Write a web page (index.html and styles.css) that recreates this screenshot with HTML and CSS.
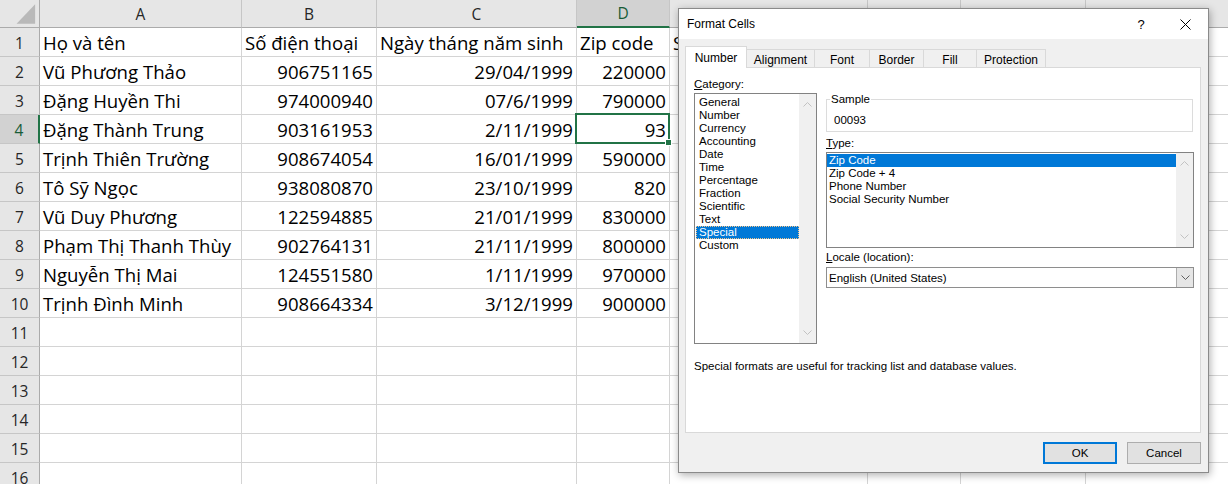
FILE: index.html
```html
<!DOCTYPE html>
<html lang="vi">
<head>
<meta charset="utf-8">
<title>Format Cells</title>
<link rel="stylesheet" href="styles.css">
</head>
<body>
<div class="sheet">
  <div class="corner"><svg width="40" height="28" viewBox="0 0 40 28"><polygon points="36,4 36,24 17,24" fill="#b9b9b9"/></svg></div>
  <div class="ch">A</div><div class="ch">B</div><div class="ch">C</div><div class="ch sel">D</div><div class="ch">E</div><div class="ch">F</div><div class="ch">G</div><div class="ch">H</div>

  <div class="rh">1</div><div class="c">Họ và tên</div><div class="c">Số điện thoại</div><div class="c">Ngày tháng năm sinh</div><div class="c">Zip code</div><div class="c">Số</div><div class="c"></div><div class="c"></div><div class="c"></div>
  <div class="rh">2</div><div class="c">Vũ Phương Thảo</div><div class="c n">906751165</div><div class="c n">29/04/1999</div><div class="c n">220000</div><div class="c"></div><div class="c"></div><div class="c"></div><div class="c"></div>
  <div class="rh">3</div><div class="c">Đặng Huyền Thi</div><div class="c n">974000940</div><div class="c n">07/6/1999</div><div class="c n">790000</div><div class="c"></div><div class="c"></div><div class="c"></div><div class="c"></div>
  <div class="rh sel">4</div><div class="c">Đặng Thành Trung</div><div class="c n">903161953</div><div class="c n">2/11/1999</div><div class="c n active">93</div><div class="c"></div><div class="c"></div><div class="c"></div><div class="c"></div>
  <div class="rh">5</div><div class="c">Trịnh Thiên Trường</div><div class="c n">908674054</div><div class="c n">16/01/1999</div><div class="c n">590000</div><div class="c"></div><div class="c"></div><div class="c"></div><div class="c"></div>
  <div class="rh">6</div><div class="c">Tô Sỹ Ngọc</div><div class="c n">938080870</div><div class="c n">23/10/1999</div><div class="c n">820</div><div class="c"></div><div class="c"></div><div class="c"></div><div class="c"></div>
  <div class="rh">7</div><div class="c">Vũ Duy Phương</div><div class="c n">122594885</div><div class="c n">21/01/1999</div><div class="c n">830000</div><div class="c"></div><div class="c"></div><div class="c"></div><div class="c"></div>
  <div class="rh">8</div><div class="c">Phạm Thị Thanh Thùy</div><div class="c n">902764131</div><div class="c n">21/11/1999</div><div class="c n">800000</div><div class="c"></div><div class="c"></div><div class="c"></div><div class="c"></div>
  <div class="rh">9</div><div class="c">Nguyễn Thị Mai</div><div class="c n">124551580</div><div class="c n">1/11/1999</div><div class="c n">970000</div><div class="c"></div><div class="c"></div><div class="c"></div><div class="c"></div>
  <div class="rh">10</div><div class="c">Trịnh Đình Minh</div><div class="c n">908664334</div><div class="c n">3/12/1999</div><div class="c n">900000</div><div class="c"></div><div class="c"></div><div class="c"></div><div class="c"></div>
  <div class="rh">11</div><div class="c"></div><div class="c"></div><div class="c"></div><div class="c"></div><div class="c"></div><div class="c"></div><div class="c"></div><div class="c"></div>
  <div class="rh">12</div><div class="c"></div><div class="c"></div><div class="c"></div><div class="c"></div><div class="c"></div><div class="c"></div><div class="c"></div><div class="c"></div>
  <div class="rh">13</div><div class="c"></div><div class="c"></div><div class="c"></div><div class="c"></div><div class="c"></div><div class="c"></div><div class="c"></div><div class="c"></div>
  <div class="rh">14</div><div class="c"></div><div class="c"></div><div class="c"></div><div class="c"></div><div class="c"></div><div class="c"></div><div class="c"></div><div class="c"></div>
  <div class="rh">15</div><div class="c"></div><div class="c"></div><div class="c"></div><div class="c"></div><div class="c"></div><div class="c"></div><div class="c"></div><div class="c"></div>
  <div class="rh">16</div><div class="c"></div><div class="c"></div><div class="c"></div><div class="c"></div><div class="c"></div><div class="c"></div><div class="c"></div><div class="c"></div>
</div>

<div class="dialog">
  <div class="titlebar">
    <span class="title">Format Cells</span>
    <span class="help">?</span>
    <span class="close"><svg width="11" height="11" viewBox="0 0 11 11"><path d="M0.5 0.5 L10.5 10.5 M10.5 0.5 L0.5 10.5" stroke="#000" stroke-width="1" fill="none"/></svg></span>
  </div>
  <div class="tabs">
    <div class="tab active" style="width:62px">Number</div>
    <div class="tab" style="width:69px">Alignment</div>
    <div class="tab" style="width:56px">Font</div>
    <div class="tab" style="width:55px">Border</div>
    <div class="tab" style="width:54px">Fill</div>
    <div class="tab" style="width:70px">Protection</div>
  </div>
  <div class="panel">
    <div class="cols">
      <div class="catcol">
        <div class="lbl"><u>C</u>ategory:</div>
        <div class="list catlist">
          <div class="items">
            <div class="item">General</div>
            <div class="item">Number</div>
            <div class="item">Currency</div>
            <div class="item">Accounting</div>
            <div class="item">Date</div>
            <div class="item">Time</div>
            <div class="item">Percentage</div>
            <div class="item">Fraction</div>
            <div class="item">Scientific</div>
            <div class="item">Text</div>
            <div class="item selected focus">Special</div>
            <div class="item">Custom</div>
          </div>
          <div class="vscroll">
            <svg width="9" height="5" viewBox="0 0 9 5"><polyline points="0.5,4.5 4.5,0.5 8.5,4.5" fill="none" stroke="#c2c2c2" stroke-width="1"/></svg>
            <svg width="9" height="5" viewBox="0 0 9 5"><polyline points="0.5,0.5 4.5,4.5 8.5,0.5" fill="none" stroke="#c2c2c2" stroke-width="1"/></svg>
          </div>
        </div>
      </div>
      <div class="rightcol">
        <fieldset class="sample">
          <legend>Sample</legend>
          <div class="sampleval">00093</div>
        </fieldset>
        <div class="lbl mt5"><u>T</u>ype:</div>
        <div class="list typelist">
          <div class="items">
            <div class="item selected">Zip Code</div>
            <div class="item">Zip Code + 4</div>
            <div class="item">Phone Number</div>
            <div class="item">Social Security Number</div>
          </div>
          <div class="vscroll">
            <svg width="9" height="5" viewBox="0 0 9 5"><polyline points="0.5,4.5 4.5,0.5 8.5,4.5" fill="none" stroke="#c2c2c2" stroke-width="1"/></svg>
            <svg width="9" height="5" viewBox="0 0 9 5"><polyline points="0.5,0.5 4.5,4.5 8.5,0.5" fill="none" stroke="#c2c2c2" stroke-width="1"/></svg>
          </div>
        </div>
        <div class="lbl mt3"><u>L</u>ocale (location):</div>
        <div class="combo">
          <span class="comboval">English (United States)</span>
          <span class="dropbtn"><svg width="9" height="5" viewBox="0 0 9 5"><polyline points="0.5,0.5 4.5,4.5 8.5,0.5" fill="none" stroke="#606060" stroke-width="1"/></svg></span>
        </div>
      </div>
    </div>
    <div class="desc">Special formats are useful for tracking list and database values.</div>
  </div>
  <div class="buttons">
    <button class="btn ok">OK</button>
    <button class="btn">Cancel</button>
  </div>
</div>
</body>
</html>
```
FILE: styles.css
```css
* { box-sizing: border-box; }
html, body { margin: 0; padding: 0; }
body {
  width: 1228px;
  height: 484px;
  overflow: hidden;
  position: relative;
  background: #fff;
  font-family: "Open Sans", "Noto Sans", sans-serif;
}

/* ---------- spreadsheet ---------- */
.sheet {
  display: grid;
  grid-template-columns: 40px 202px 135px 200px 93px 198px 93px 125px 170px;
  grid-template-rows: 28px repeat(16, 29px);
}
.sheet > div {
  border-right: 1px solid #d4d4d4;
  border-bottom: 1px solid #d4d4d4;
  display: flex;
  align-items: center;
  white-space: nowrap;
  min-width: 0;
}
.corner {
  background: #e6e6e6;
  border-right-color: #ababab !important;
  border-bottom-color: #ababab !important;
}
.ch {
  background: #e6e6e6;
  border-right-color: #c6c6c6 !important;
  border-bottom-color: #ababab !important;
  justify-content: center;
  font-size: 15.5px;
  color: #262626;
}
.ch.sel {
  background: #d2d2d2;
  border-bottom: 2px solid #217346 !important;
  color: #185c37;
}
.rh {
  background: #e6e6e6;
  border-right-color: #ababab !important;
  border-bottom-color: #c6c6c6 !important;
  justify-content: center;
  font-size: 15.5px;
  color: #262626;
  padding-top: 1px;
}
.rh.sel {
  background: #d2d2d2;
  border-right: 2px solid #217346 !important;
  color: #185c37;
}
.c {
  font-size: 18.6px;
  color: #000;
  padding: 0 3px;
}
.c.n {
  justify-content: flex-end;
}
.c.active { position: relative; }
.c.active::after {
  content: "";
  position: absolute;
  left: -2px; top: -2px; right: -1px; bottom: -1px;
  border: 2px solid #217346;
}
.c.active::before {
  content: "";
  position: absolute;
  right: -3px; bottom: -3px;
  width: 5px; height: 5px;
  background: #217346;
  border: 1px solid #fff;
  z-index: 1;
}

/* ---------- dialog ---------- */
.dialog {
  position: absolute;
  left: 678px;
  top: 8px;
  width: 531px;
  height: 465px;
  background: #f0f0f0;
  border: 1px solid #8a8a8a;
  box-shadow: 1px 2px 8px rgba(0, 0, 0, 0.32);
  font-family: "Liberation Sans", Arial, sans-serif;
  font-size: 11.5px;
  color: #000;
  display: flex;
  flex-direction: column;
}
.titlebar {
  height: 30px;
  background: #fff;
  display: flex;
  align-items: center;
  padding-left: 8px;
  font-size: 12px;
}
.title { flex: 1; }
.help {
  width: 10px;
  text-align: center;
  font-size: 13px;
  margin-right: 34px;
}
.close {
  width: 11px;
  height: 11px;
  margin-right: 17px;
  display: flex;
}
.tabs {
  height: 28px;
  display: flex;
  align-items: flex-end;
  padding-left: 6px;
  font-size: 12px;
}
.tab {
  height: 18px;
  border: 1px solid #d9d9d9;
  border-bottom: none;
  margin-left: -1px;
  display: flex;
  justify-content: center;
  align-items: center;
  padding-top: 2px;
  background: #f0f0f0;
}
.tab:first-child { margin-left: 0; }
.tab.active {
  height: 22px;
  margin-bottom: -1px;
  background: #fff;
  position: relative;
  z-index: 1;
  padding-top: 0;
}
.panel {
  height: 366px;
  margin: 0 7px 0 6px;
  background: #fff;
  border: 1px solid #d9d9d9;
  padding: 10px 0 0 8px;
}
.cols {
  display: flex;
  gap: 9px;
}
.lbl {
  height: 13px;
  line-height: 13px;
  white-space: nowrap;
}
.catcol { width: 123px; }
.list {
  border: 1px solid #828282;
  display: flex;
  background: #fff;
}
.catlist { margin-top: 2px; height: 251px; }
.items { flex: 1; min-width: 0; }
.catlist .items { padding: 2px 0 0 1px; }
.typelist .items { padding: 1px 0 0 0; }
.item {
  height: 13px;
  line-height: 13px;
  white-space: nowrap;
}
.catlist .item { padding-left: 3px; }
.typelist .item { padding-left: 2px; }
.item.selected {
  background: #0078d7;
  color: #fff;
}
.item.focus {
  outline: 1px dotted #f2c48c;
  outline-offset: -1px;
}
.vscroll {
  width: 17px;
  background: #f0f0f0;
  display: flex;
  flex-direction: column;
  justify-content: space-between;
  align-items: center;
  padding: 8px 0 8px 0;
}
.rightcol { width: 368px; margin-top: 15px; }
.sample {
  width: 367px;
  margin: 0;
  padding: 8px 0 4px 0;
  border: 1px solid #dcdcdc;
  min-width: 0;
}
.sample legend {
  padding: 0 1px;
  margin-left: 3px;
  line-height: 13px;
}
.sampleval { line-height: 13px; height: 13px; padding-left: 7px; }
.mt5 { margin-top: 5px; }
.mt3 { margin-top: 3px; }
.typelist { margin-top: 2px; height: 96px; }
.combo {
  margin-top: 3px;
  height: 21px;
  border: 1px solid #8e8e8e;
  display: flex;
  align-items: stretch;
}
.comboval {
  flex: 1;
  padding-left: 2px;
  display: flex;
  align-items: center;
}
.dropbtn {
  width: 17px;
  background: #e6e6e6;
  border-left: 1px solid #adadad;
  display: flex;
  align-items: center;
  justify-content: center;
}
.desc {
  margin-top: 16px;
  height: 13px;
  line-height: 13px;
}
.buttons {
  display: flex;
  justify-content: flex-end;
  gap: 10px;
  margin: 9px 7px 0 0;
}
.btn {
  width: 74px;
  height: 22px;
  background: #e1e1e1;
  border: 1px solid #adadad;
  font-family: "Liberation Sans", Arial, sans-serif;
  font-size: 11.5px;
  color: #000;
  padding: 0;
  margin: 0;
}
.btn.ok {
  border: 2px solid #0078d7;
}
```
